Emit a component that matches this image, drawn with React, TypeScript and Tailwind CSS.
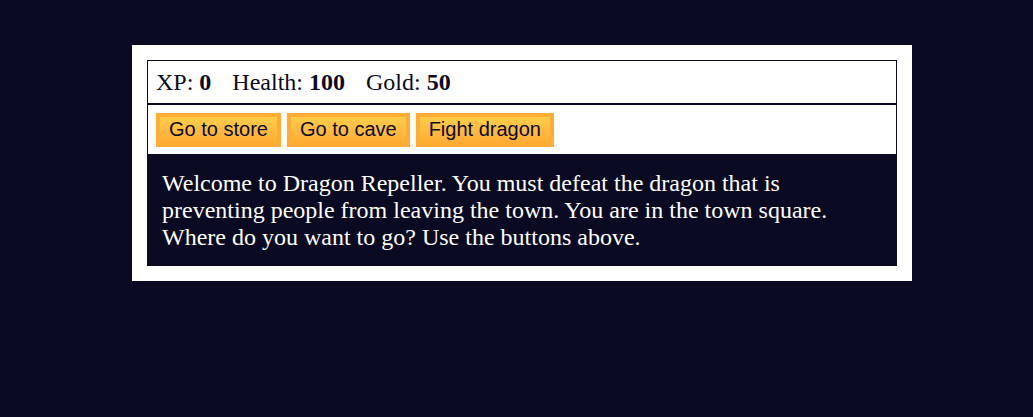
import React from "react";

export default function App() {
  return (
    <div className="min-h-screen bg-[#0a0a23] pt-[45px] [font-family:'Liberation_Serif',serif]">
      <div className="ml-[132px] w-[780px] bg-white p-[15px] text-white">
        <div className="border border-[#0a0a23] px-[8px] py-[7.5px] text-[24px] leading-[27px] text-[#0a0a23]">
          <span className="pr-[15px]">
            XP: <strong>0</strong>
          </span>{" "}
          <span className="pr-[15px]">
            Health: <strong>100</strong>
          </span>{" "}
          <span className="pr-[15px]">
            Gold: <strong>50</strong>
          </span>
        </div>
        <div className="flex gap-[6px] border border-[#0a0a23] px-[8px] py-[7.5px] text-[#0a0a23]">
          {["Go to store", "Go to cave", "Fight dragon"].map((t) => (
            <button
              key={t}
              className="h-[34px] cursor-pointer border-4 border-[#feac32] bg-[#feac32] bg-gradient-to-b from-[#fecc4c] to-[#ffac33] px-[9px] text-[20px] leading-[23px] text-[#0a0a23] [font-family:'Liberation_Sans',Arial,sans-serif]"
            >
              {t}
            </button>
          ))}
        </div>
        <div className="bg-[#0a0a23] p-[15px] text-[24px] leading-[27px] text-white">
          Welcome to Dragon Repeller. You must defeat the dragon that is preventing people from leaving the town. You are in the town square. Where do you want to go? Use the buttons above.
        </div>
      </div>
    </div>
  );
}
